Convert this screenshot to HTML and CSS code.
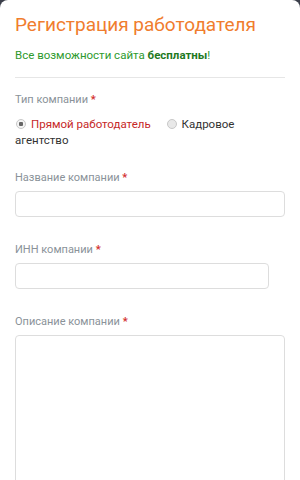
FILE: index.html
```html
<!DOCTYPE html>
<html lang="ru">
<head>
  <meta charset="UTF-8">
  <title>Регистрация работодателя</title>
  <link rel="stylesheet" href="styles.css">
</head>
<body>

<div class="card">
  <h1>Регистрация работодателя</h1>
  <p class="free">Все возможности сайта <b>бесплатны</b>!</p>
  <hr>

  <div class="field type">
    <div class="label">Тип компании <span class="req">*</span></div>
    <div class="radios">
      <span class="radio checked"><span class="dot"></span>Прямой работодатель</span>
      <span class="radio"><span class="dot"></span>Кадровое агентство</span>
    </div>
  </div>

  <div class="field">
    <div class="label">Название компании <span class="req">*</span></div>
    <input class="input" type="text">
  </div>

  <div class="field">
    <div class="label">ИНН компании <span class="req">*</span></div>
    <input class="input short" type="text">
  </div>

  <div class="field">
    <div class="label">Описание компании <span class="req">*</span></div>
    <textarea class="input area"></textarea>
  </div>
</div>

</body>
</html>
```

FILE: styles.css
```css
body {
  margin: 0;
  background: #3b3f4a;
  font-family: Roboto, "Noto Sans", sans-serif;
}
.card {
  background: #fff;
  border-radius: 8px 8px 0 0;
  padding: 13px 15px 0;
  height: 480px;
  overflow: hidden;
  box-sizing: border-box;
}
h1 {
  margin: 0;
  font-size: 19px;
  font-weight: 400;
  color: #f07d2e;
  line-height: 24px;
}
.free {
  margin: 11px 0 0;
  font-size: 11.5px;
  line-height: 14px;
  color: #2e9a2e;
}
.free b { color: #1f7a1f; }
hr {
  border: 0;
  border-top: 1px solid #e6e6e6;
  margin: 15px 0 0;
}
.field { margin-top: 26px; }
.field.type { margin-top: 15px; margin-bottom: -3px; }
.label {
  font-size: 11px;
  color: #8a9299;
  line-height: 14px;
}
.req { color: #d32f2f; font-weight: 700; }
.radios {
  margin-top: 9px;
  font-size: 11.5px;
  line-height: 16px;
  color: #333;
}
.radio { margin-right: 12px; }
.radio .dot {
  display: inline-block;
  width: 8px;
  height: 8px;
  border: 1px solid #c8c8c8;
  border-radius: 50%;
  background: #e8e8e8;
  margin: 0 5px 0 1px;
  vertical-align: -1px;
}
.radio.checked { color: #c62828; }
.radio.checked .dot {
  background: radial-gradient(circle, #666 0 2px, #f4f4f4 2.5px);
}
.input {
  display: block;
  box-sizing: border-box;
  width: 100%;
  height: 26px;
  margin-top: 6px;
  border: 1px solid #ddd;
  border-radius: 4px;
  background: #fff;
}
.input.short { width: 254px; }
.area {
  height: 160px;
  resize: none;
}
```
